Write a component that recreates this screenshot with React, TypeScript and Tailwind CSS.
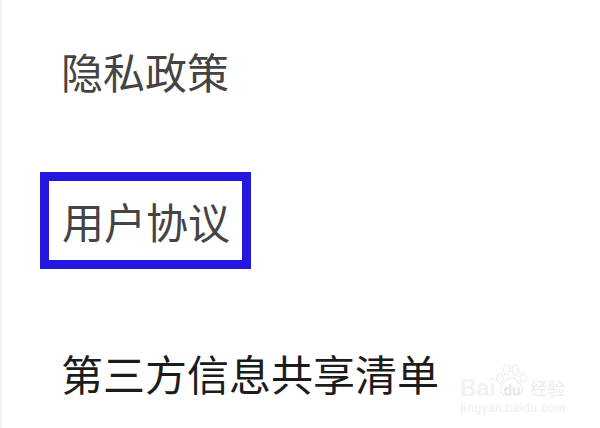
const font = "font-['Noto_Sans_CJK_SC','Noto_Sans',sans-serif]";

const Watermark = () => {
  return (
    <div className="absolute left-[460px] top-[363px] w-[110px] h-[52px] select-none text-[#f2f2f2]">
      <div className="relative flex items-start h-[36px]">
        <span className="font-['Liberation_Sans',sans-serif] font-bold text-[23px] leading-none w-[35px] mt-[14px]">
          Bai
        </span>
        <svg viewBox="0 0 34 34" className="w-[33px] h-[35px]" fill="none" stroke="#ececec" strokeWidth="1.3">
          <ellipse cx="5" cy="15" rx="3.2" ry="4.5" />
          <ellipse cx="12" cy="6" rx="3.4" ry="5" />
          <ellipse cx="21" cy="6" rx="3.4" ry="5" />
          <ellipse cx="29" cy="14" rx="3.2" ry="4.5" />
          <path d="M17 14c-5 0-6 4-9 7-3 3-3 11 3 11 2 0 4-1 6-1s4 1 6 1c6 0 6-8 3-11-3-3-4-7-9-7z" />
        </svg>
        <span className="absolute left-[41px] top-[20px] w-[22px] text-center text-[14px] leading-none font-bold font-['Liberation_Sans',sans-serif] text-[#e8e8e8]">
          du
        </span>
        <span className={`${font} text-[17.5px] leading-none ml-[2px] mt-[16px] text-[#ececec] whitespace-nowrap`}>经验</span>
      </div>
      <div className="font-['Liberation_Sans',sans-serif] font-bold text-[12px] leading-none mt-[3px] text-[#f3f3f3] whitespace-nowrap">
        jingyan.baidu.com
      </div>
    </div>
  );
};

const App = () => {
  return (
    <div className={`relative w-[600px] h-[428px] overflow-hidden bg-white ${font} text-[42px] leading-none`}>
      <div className="h-full border-l-[2px] border-[#f1f1f1] pl-[38px] flex flex-col">
        <div className="h-[172px] pl-[21px] pt-[50px] text-[#444444]">隐私政策</div>
        <div className="w-[211px] h-[97px] border-[9px] border-[#2418e0] pl-[13px] flex items-center text-[#444444]">
          用户协议
        </div>
        <div className="pl-[21px] pt-[83px] text-[#1c1c1c] whitespace-nowrap">第三方信息共享清单</div>
      </div>
      <Watermark />
    </div>
  );
};

export default App;
